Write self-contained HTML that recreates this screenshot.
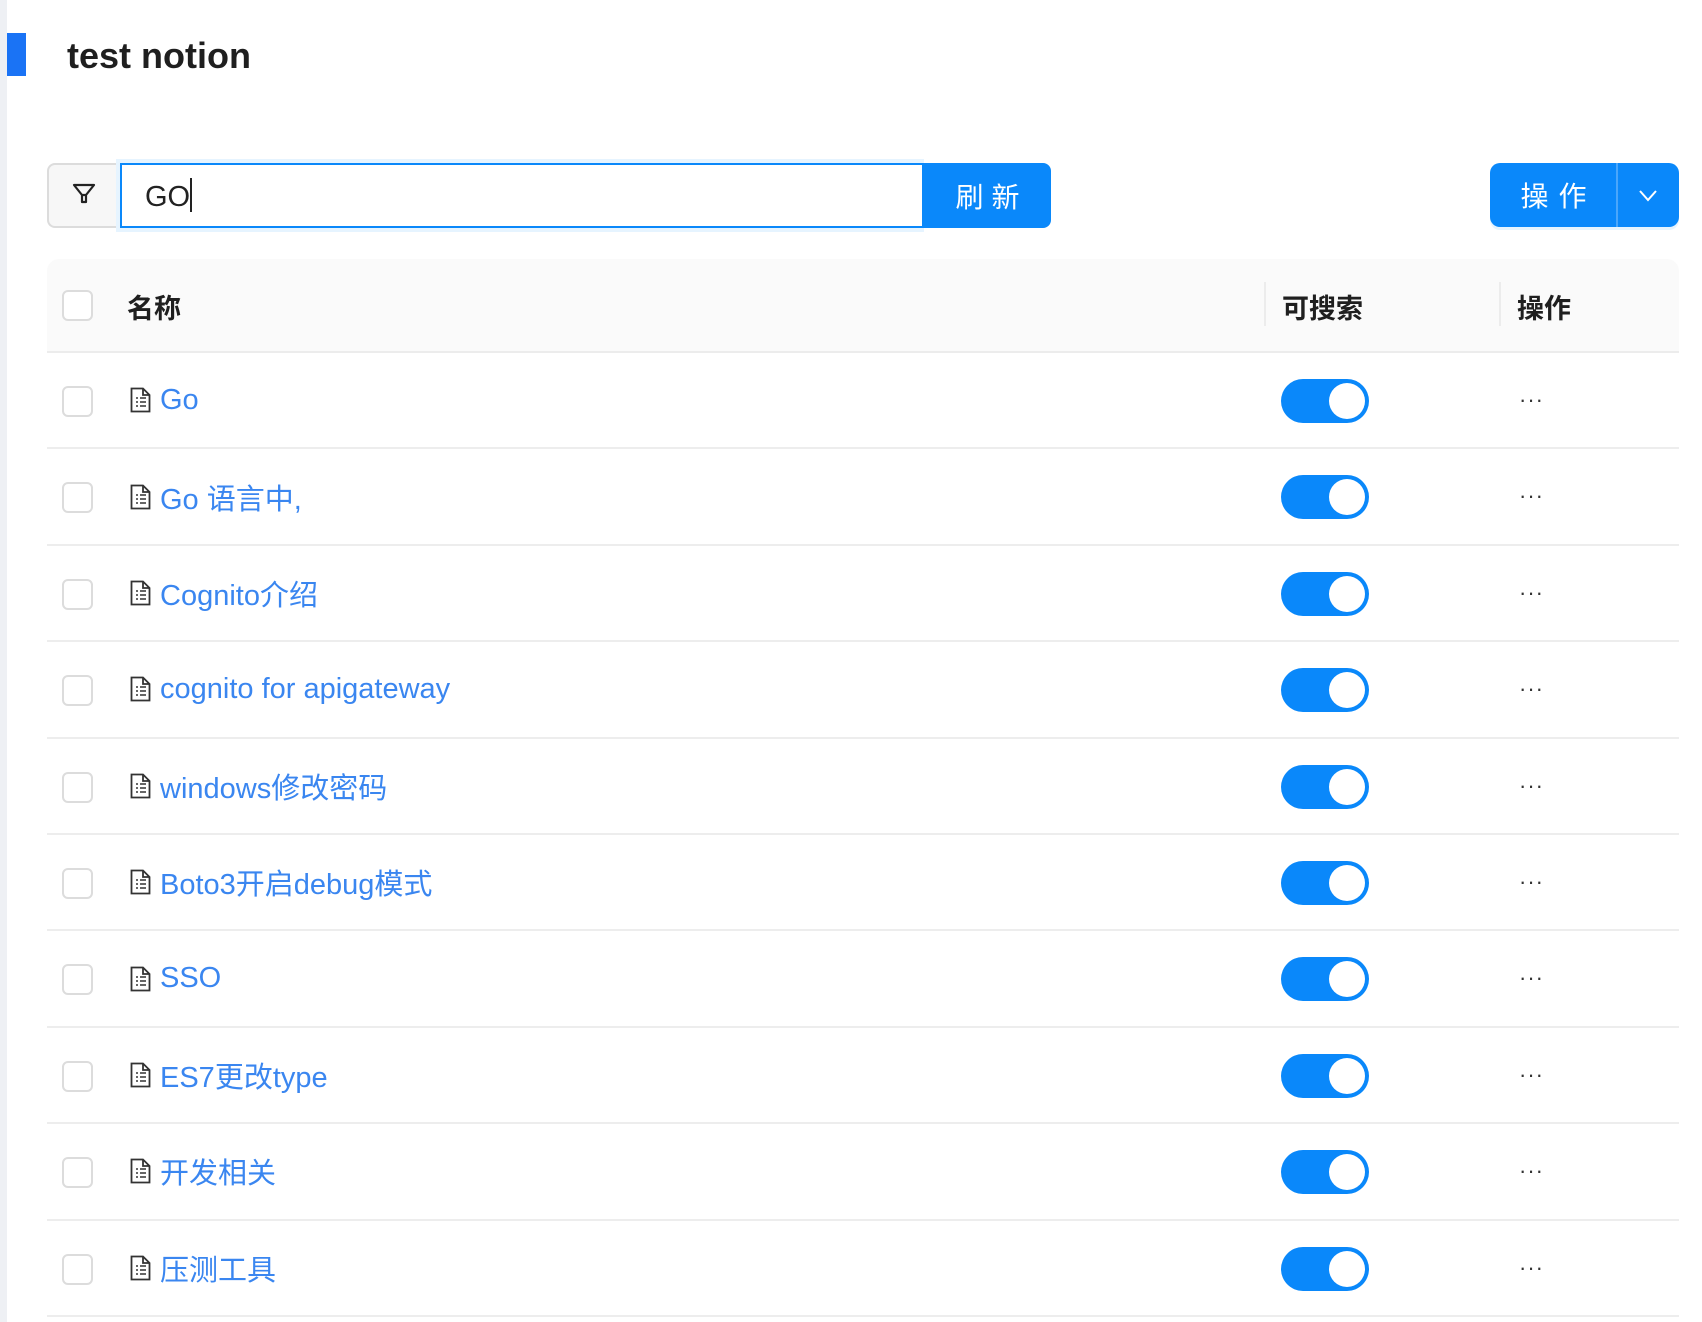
<!DOCTYPE html>
<html><head><meta charset="utf-8"><style>
*{box-sizing:border-box;margin:0;padding:0}
body{width:1702px;height:1322px;background:#fff;position:relative;overflow:hidden;font-family:"Liberation Sans","Noto Sans CJK SC",sans-serif}
.a{position:absolute}
.cb{position:absolute;left:62px;width:31px;height:31px;border:2px solid #dcdcdc;border-radius:6px;background:#fff}
.row{position:absolute;left:47px;width:1632px;height:96.4px;border-bottom:2px solid #ededed}
.name{position:absolute;left:83px;top:0;height:100%;display:flex;align-items:center;color:#3a86f0;font-size:29px}
.name svg{margin-right:9px}
.tg{position:absolute;left:1234px;width:88px;height:44px;border-radius:22px;background:#0a88fa}
.tg::after{content:"";position:absolute;right:4px;top:4px;width:36px;height:36px;border-radius:50%;background:#fff}
.dots{position:absolute;left:1472px;font-size:22px;color:#333;letter-spacing:1px}
</style></head><body>
<div class="a" style="left:0;top:0;width:7px;height:1322px;background:#eef0f4"></div>
<div class="a" style="left:7px;top:33px;width:19px;height:43px;background:#1a73f5"></div>
<div class="a" style="left:67px;top:35px;font-size:36px;font-weight:bold;color:#1f1f1f">test notion</div>

<div class="a" style="left:47px;top:163px;width:80px;height:65px;border:2px solid #dcdcdc;border-right:none;border-radius:8px 0 0 8px;background:#f7f7f7"></div>
<svg class="a" style="left:71px;top:181px" width="26" height="26" viewBox="0 0 26 26"><path d="M3 4H23L15 14V21H11V14Z M11 14H15" fill="none" stroke="#222" stroke-width="2.2" stroke-linejoin="round"/></svg>
<div class="a" style="left:116px;top:159px;width:808px;height:73px;background:#e6f4ff"></div>
<div class="a" style="left:120px;top:163px;width:804px;height:65px;border:2px solid #0a88fa;background:#fff"></div>
<div class="a" style="left:145px;top:178px;font-size:29px;color:#222">GO<span style="display:inline-block;width:2px;height:34px;background:#222;vertical-align:-6px"></span></div>
<div class="a" style="left:924px;top:163px;width:127px;height:65px;background:#0a88fa;border-radius:0 8px 8px 0;color:#fff;font-size:28px;display:flex;align-items:center;justify-content:center;letter-spacing:8px;padding-left:8px">刷新</div>

<div class="a" style="left:1490px;top:163px;width:189px;height:64px;background:#0a88fa;border-radius:10px;box-shadow:0 3px 0 #e6f4ff"></div>
<div class="a" style="left:1490px;top:163px;width:127px;height:64px;color:#fff;font-size:28px;display:flex;align-items:center;justify-content:center;letter-spacing:10px;padding-left:10px">操作</div>
<div class="a" style="left:1616px;top:163px;width:2px;height:64px;background:#4aa6fb"></div>
<svg class="a" style="left:1637px;top:184px" width="22" height="22" viewBox="0 0 22 22"><path d="M3 7L11 16L19 7" fill="none" stroke="#fff" stroke-width="2"/></svg>

<div class="a" style="left:47px;top:259px;width:1632px;height:94px;background:#fafafa;border-radius:12px 12px 0 0;border-bottom:2px solid #ececec"></div>
<div class="cb" style="top:290px"></div>
<div class="a" style="left:127px;top:287px;font-size:27px;font-weight:bold;color:#1f1f1f">名称</div>
<div class="a" style="left:1264px;top:282px;width:2px;height:44px;background:#ececec"></div>
<div class="a" style="left:1282px;top:287px;font-size:27px;font-weight:bold;color:#1f1f1f">可搜索</div>
<div class="a" style="left:1499px;top:282px;width:2px;height:44px;background:#ececec"></div>
<div class="a" style="left:1517px;top:287px;font-size:27px;font-weight:bold;color:#1f1f1f">操作</div>

<div id="rows"></div>
<script>
var n=["Go","Go 语言中,","Cognito介绍","cognito for apigateway","windows修改密码","Boto3开启debug模式","SSO","ES7更改type","开发相关","压测工具"];
var ic='<svg width="21" height="26" viewBox="0 0 21 26"><path d="M1.5 1.5H13L19.5 8V24.5H1.5Z M13 1.5V8H19.5" fill="none" stroke="#333" stroke-width="1.8"/><path d="M6 11h2M10 11h6M6 15h2M10 15h6M6 19h2M10 19h6" stroke="#333" stroke-width="1.6"/></svg>';
var h="";
for(var i=0;i<n.length;i++){var t=353+i*96.4;
h+='<div class="row" style="top:'+t+'px"><div class="cb" style="left:15px;top:33px"></div><div class="name">'+ic+n[i]+'</div><div class="tg" style="top:26px"></div><div class="dots" style="top:34px">···</div></div>';}
document.getElementById("rows").innerHTML=h;
</script>
</body></html>
